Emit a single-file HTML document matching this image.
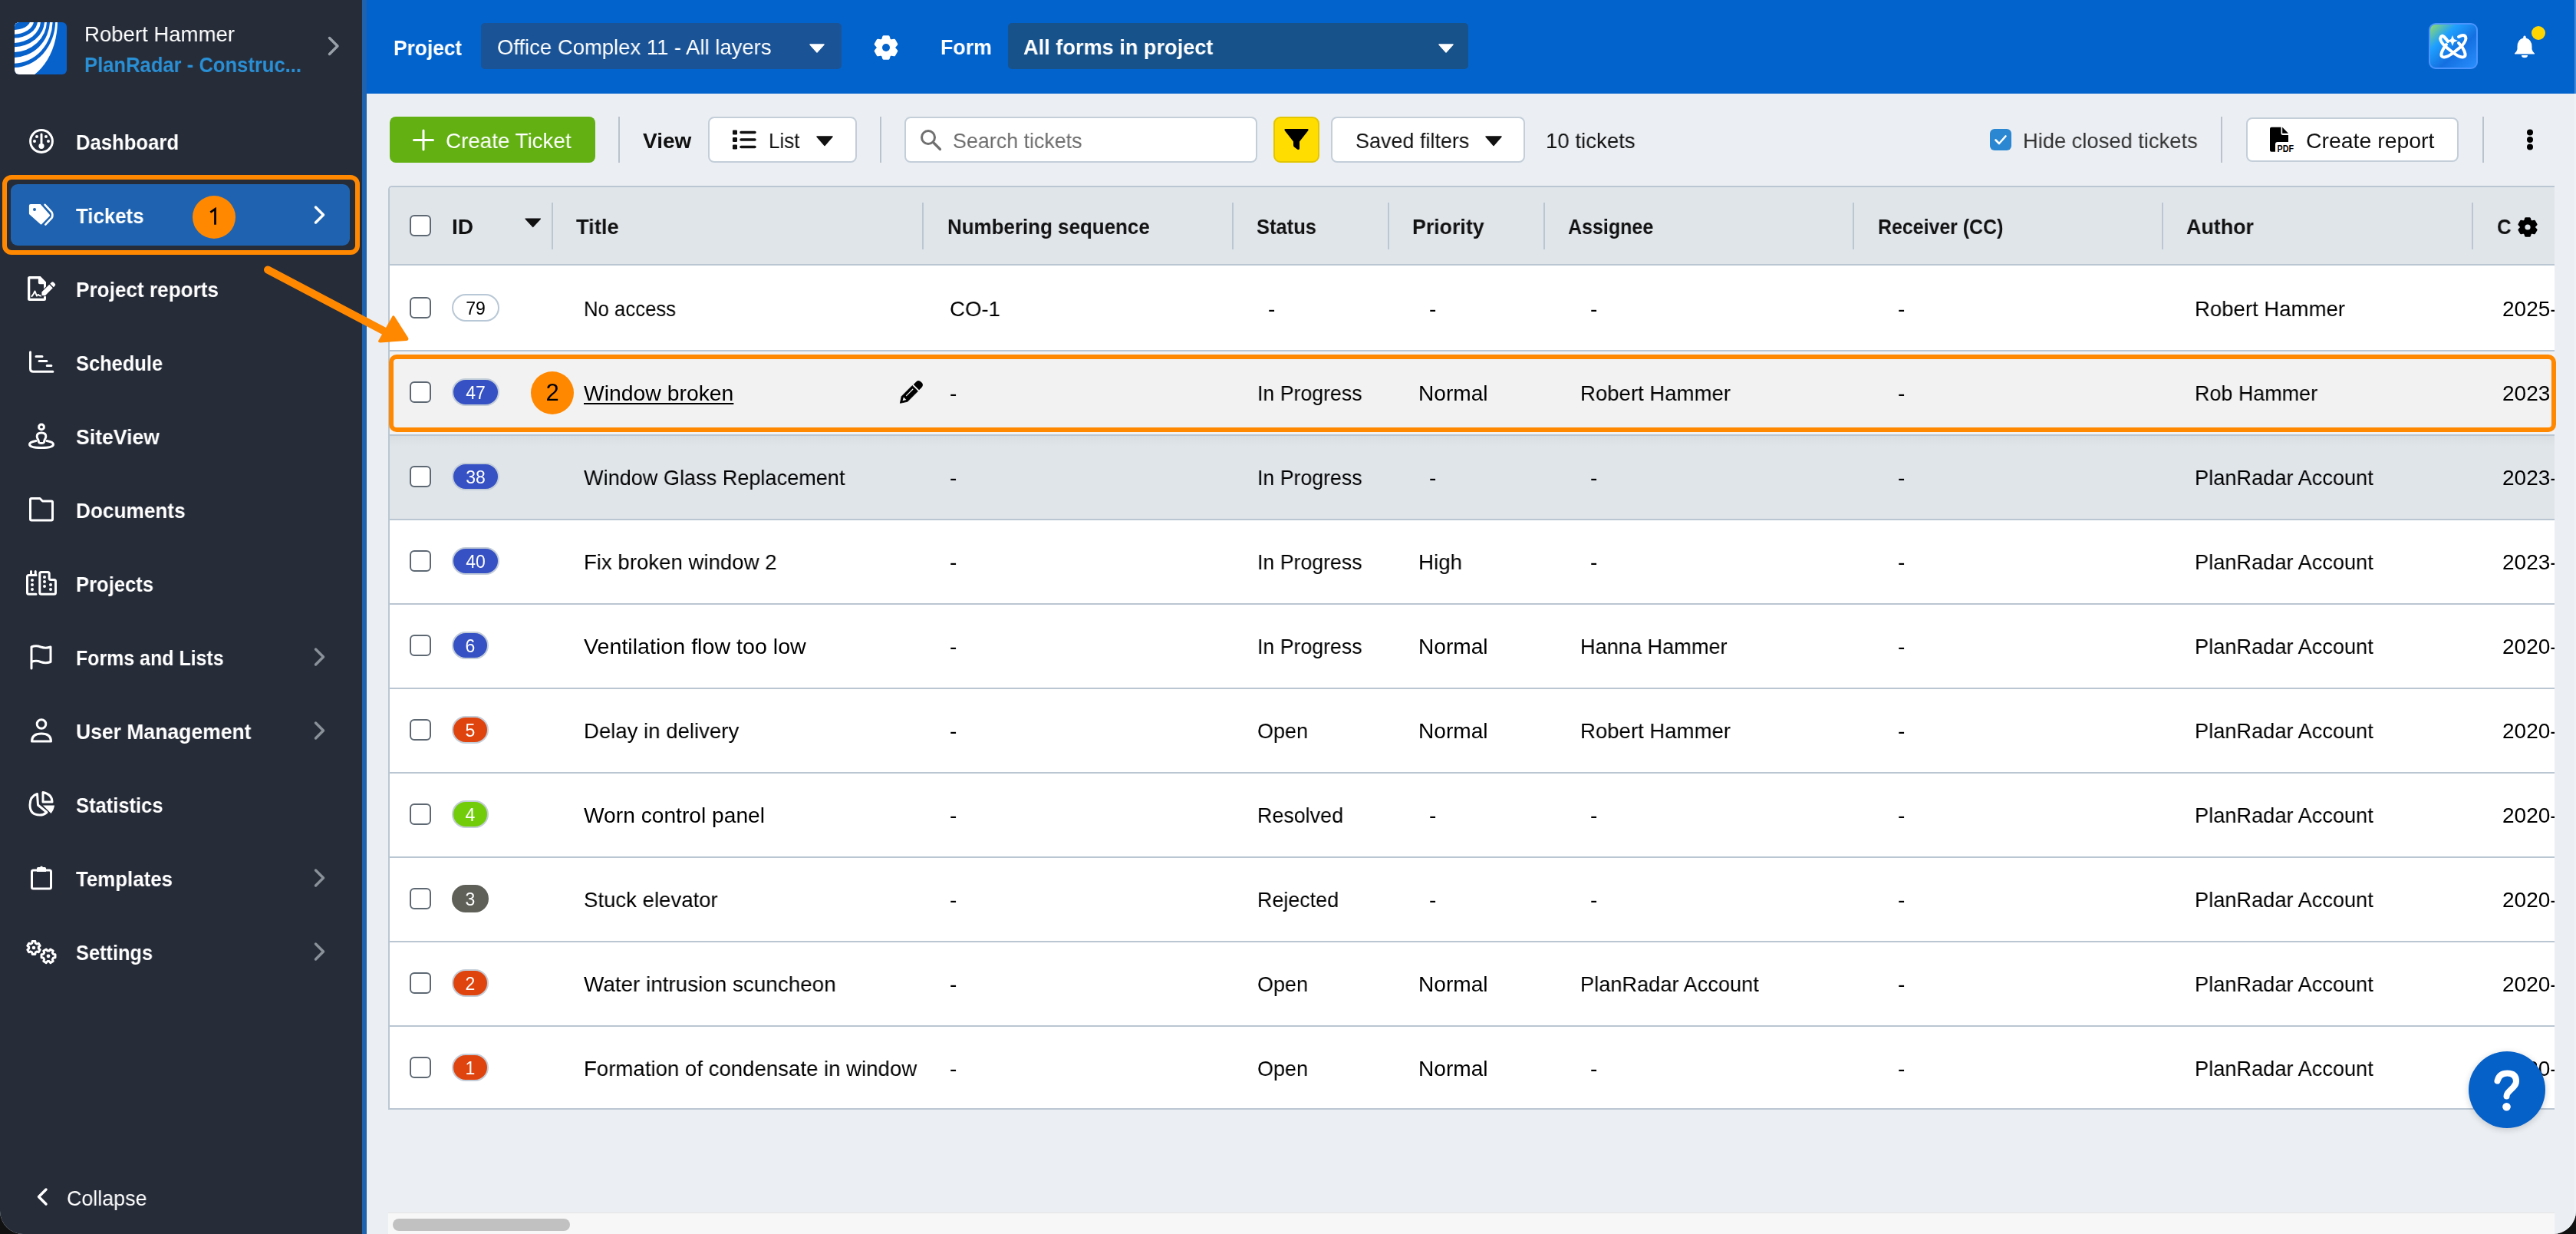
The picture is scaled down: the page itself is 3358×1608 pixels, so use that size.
<!DOCTYPE html><html><head><meta charset="utf-8"><style>html,body{margin:0;padding:0;width:3358px;height:1608px;overflow:hidden;background:#111;}#app{position:absolute;left:0;top:0;width:3358px;height:1608px;overflow:hidden;border-radius:0 0 30px 30px;background:#ebeff3;font-family:"Liberation Sans", sans-serif;}.t{position:absolute;white-space:nowrap;will-change:transform;}.r{position:absolute;}.s{position:absolute;overflow:visible;}</style></head><body><div id="app"><div class="r" style="left:0px;top:0px;width:472px;height:1608px;background:#262c38"></div>
<div class="r" style="left:472px;top:0px;width:6px;height:1608px;background:#1f62ae"></div>
<div class="r" style="left:478px;top:0px;width:2880px;height:122px;background:#0363cc"></div>
<div class="r" style="left:478px;top:122px;width:2880px;height:1486px;background:#ebeff3"></div>
<svg class="s" style="left:17px;top:27px;" width="72" height="72" viewBox="17 27 72 72"><defs><clipPath id="lc"><rect x="19" y="29" width="68" height="68" rx="6"/></clipPath></defs><rect x="19" y="29" width="68" height="68" rx="6" fill="#0862cc"/><g clip-path="url(#lc)"><ellipse cx="17" cy="27" rx="58.02" ry="80.05" fill="#fff"/><ellipse cx="17" cy="27" rx="55.23" ry="61.04" fill="#0862cc"/><ellipse cx="17" cy="27" rx="51.63" ry="55.74" fill="#fff"/><ellipse cx="17" cy="27" rx="48.04" ry="47.94" fill="#0862cc"/><ellipse cx="17" cy="27" rx="44.05" ry="41.04" fill="#fff"/><ellipse cx="17" cy="27" rx="41.07" ry="34.34" fill="#0862cc"/><ellipse cx="17" cy="27" rx="35.99" ry="28.94" fill="#fff"/><ellipse cx="17" cy="27" rx="32.03" ry="22.64" fill="#0862cc"/><ellipse cx="17" cy="27" rx="27.07" ry="17.75" fill="#fff"/><ellipse cx="17" cy="27" rx="22.11" ry="11.95" fill="#0862cc"/></g></svg>
<div class="t" style="left:110px;top:31px;font-size:28px;line-height:28px;font-weight:400;color:#fff;transform:scaleX(0.9841);transform-origin:0 0;">Robert Hammer</div>
<div class="t" style="left:110px;top:71px;font-size:28px;line-height:28px;font-weight:700;color:#2a90d6;transform:scaleX(0.9140);transform-origin:0 0;">PlanRadar - Construc...</div>
<svg class="s" style="left:420px;top:40px;" width="30" height="40" viewBox="420 40 30 40"><path d="M429.5 49.5 L440 60 L429.5 70.5" fill="none" stroke="#9aa0a8" stroke-width="3.5" stroke-linecap="round" stroke-linejoin="round"/></svg>
<div class="r" style="left:3px;top:228px;width:466px;height:104px;border:6px solid #ff8800;border-radius:12px;box-sizing:border-box"></div>
<div class="r" style="left:14px;top:240px;width:442px;height:80px;background:#1f63b0;border-radius:9px"></div>
<div class="t" style="left:99px;top:172px;font-size:28px;line-height:28px;font-weight:700;color:#fff;transform:scaleX(0.9162);transform-origin:0 0;">Dashboard</div>
<div class="t" style="left:99px;top:268px;font-size:28px;line-height:28px;font-weight:700;color:#fff;transform:scaleX(0.9219);transform-origin:0 0;">Tickets</div>
<div class="t" style="left:99px;top:364px;font-size:28px;line-height:28px;font-weight:700;color:#fff;transform:scaleX(0.9339);transform-origin:0 0;">Project reports</div>
<div class="t" style="left:99px;top:460px;font-size:28px;line-height:28px;font-weight:700;color:#fff;transform:scaleX(0.9077);transform-origin:0 0;">Schedule</div>
<div class="t" style="left:99px;top:556px;font-size:28px;line-height:28px;font-weight:700;color:#fff;transform:scaleX(0.9507);transform-origin:0 0;">SiteView</div>
<div class="t" style="left:99px;top:652px;font-size:28px;line-height:28px;font-weight:700;color:#fff;transform:scaleX(0.9353);transform-origin:0 0;">Documents</div>
<div class="t" style="left:99px;top:748px;font-size:28px;line-height:28px;font-weight:700;color:#fff;transform:scaleX(0.9140);transform-origin:0 0;">Projects</div>
<div class="t" style="left:99px;top:844px;font-size:28px;line-height:28px;font-weight:700;color:#fff;transform:scaleX(0.8906);transform-origin:0 0;">Forms and Lists</div>
<svg class="s" style="left:400px;top:840px;" width="30" height="32" viewBox="400 840 30 32"><path d="M411.5 846 L421.5 856 L411.5 866" fill="none" stroke="#8b9199" stroke-width="3.5" stroke-linecap="round" stroke-linejoin="round"/></svg>
<div class="t" style="left:99px;top:940px;font-size:28px;line-height:28px;font-weight:700;color:#fff;transform:scaleX(0.9474);transform-origin:0 0;">User Management</div>
<svg class="s" style="left:400px;top:936px;" width="30" height="32" viewBox="400 936 30 32"><path d="M411.5 942 L421.5 952 L411.5 962" fill="none" stroke="#8b9199" stroke-width="3.5" stroke-linecap="round" stroke-linejoin="round"/></svg>
<div class="t" style="left:99px;top:1036px;font-size:28px;line-height:28px;font-weight:700;color:#fff;transform:scaleX(0.9116);transform-origin:0 0;">Statistics</div>
<div class="t" style="left:99px;top:1132px;font-size:28px;line-height:28px;font-weight:700;color:#fff;transform:scaleX(0.9236);transform-origin:0 0;">Templates</div>
<svg class="s" style="left:400px;top:1128px;" width="30" height="32" viewBox="400 1128 30 32"><path d="M411.5 1134 L421.5 1144 L411.5 1154" fill="none" stroke="#8b9199" stroke-width="3.5" stroke-linecap="round" stroke-linejoin="round"/></svg>
<div class="t" style="left:99px;top:1228px;font-size:28px;line-height:28px;font-weight:700;color:#fff;transform:scaleX(0.9052);transform-origin:0 0;">Settings</div>
<svg class="s" style="left:400px;top:1224px;" width="30" height="32" viewBox="400 1224 30 32"><path d="M411.5 1230 L421.5 1240 L411.5 1250" fill="none" stroke="#8b9199" stroke-width="3.5" stroke-linecap="round" stroke-linejoin="round"/></svg>
<svg class="s" style="left:400px;top:264px;" width="30" height="32" viewBox="400 264 30 32"><path d="M411.5 270 L421.5 280 L411.5 290" fill="none" stroke="#fff" stroke-width="3.5" stroke-linecap="round" stroke-linejoin="round"/></svg>
<div class="r" style="left:251px;top:255px;width:56px;height:56px;background:#ff8800;border-radius:50%"></div>
<svg class="s" style="left:265px;top:265px;" width="30" height="35" viewBox="265 265 30 35"><path d="M280.5 292.7 L280.5 272.3 L274.3 276.6" fill="none" stroke="#000" stroke-width="2.7" stroke-linejoin="miter" stroke-linecap="butt"/></svg>
<svg class="s" style="left:30px;top:154px;" width="50" height="60" viewBox="30 154 50 60"><circle cx="54" cy="184" r="14.4" fill="none" stroke="#fff" stroke-width="3" stroke-linecap="round" stroke-linejoin="round"/><rect x="52.5" y="173.5" width="3" height="14" rx="1.5" fill="#fff"/><circle cx="54" cy="190.3" r="3.6" fill="#fff"/><circle cx="48" cy="178" r="2" fill="#fff"/><circle cx="60" cy="178" r="2" fill="#fff"/><circle cx="45" cy="184" r="2" fill="#fff"/><circle cx="63" cy="184" r="2" fill="#fff"/></svg>
<svg class="s" style="left:30px;top:250px;" width="50" height="60" viewBox="30 250 50 60"><path d="M40 266 L52.7 266 L64.8 279.8 Q65.5 280.6 64.8 281.4 L54.5 292 Q53.5 293 52.5 292 L38.5 279.5 Q37.9 279 37.9 278 L37.9 268 Q37.9 266 40 266 Z" fill="#fff"/><circle cx="45" cy="273" r="2" fill="#1f63b0"/><path d="M58.6 266.8 L67.5 276.5 Q69.5 280.5 67.5 284 L59.3 292.6" fill="none" stroke="#fff" stroke-width="2.6" stroke-linecap="round"/></svg>
<svg class="s" style="left:30px;top:346px;" width="50" height="60" viewBox="30 346 50 60"><path fill-rule="evenodd" fill="#fff" d="M38.5 360 L52.7 360 L60 367.4 L60 389.5 Q60 392 57.5 392 L38.5 392 Q36 392 36 389.5 L36 362.5 Q36 360 38.5 360 Z M39.3 363.4 L49.9 363.4 L49.9 368.5 Q49.9 370.3 51.7 370.3 L57 370.3 L57 388.7 L39.3 388.7 Z"/><path d="M41.5 386 Q43.5 384 45.5 379.5 Q47 383.5 48 385.5 Q49.5 383 51 385 L53.5 385.5" fill="none" stroke="#fff" stroke-width="2" stroke-linecap="round" stroke-linejoin="round"/><path d="M54.5 385 L54.36 380.62 L64.26 370.72 L68.78 375.24 L58.88 385.14 Z" fill="#fff" stroke="#262c38" stroke-width="2.2" stroke-linejoin="round"/><path d="M54.5 385 L54.36 380.62 L64.26 370.72 L68.78 375.24 L58.88 385.14 Z" fill="#fff"/><path d="M65.32 369.66 L67.2 367.8 Q68.5 366.5 69.8 367.8 L71.7 369.7 Q73 371 71.7 372.3 L69.84 374.18 Z" fill="#fff"/></svg>
<svg class="s" style="left:30px;top:442px;" width="50" height="60" viewBox="30 442 50 60"><path d="M39.5 458.8 L39.5 480.5 Q39.5 484.3 43.3 484.3 L68.9 484.3" fill="none" stroke="#fff" stroke-width="3" stroke-linecap="round" stroke-linejoin="round"/><path d="M47 464.4 L55 464.4 M51 470.5 L61 470.5 M61.2 476.4 L66.9 476.4" fill="none" stroke="#fff" stroke-width="3" stroke-linecap="round" stroke-linejoin="round"/></svg>
<svg class="s" style="left:30px;top:538px;" width="50" height="60" viewBox="30 538 50 60"><circle cx="54" cy="556.4" r="3.4" fill="none" stroke="#fff" stroke-width="3" stroke-linecap="round" stroke-linejoin="round"/><path d="M49.8 573 Q48.2 571 48.2 568.5 Q48.2 563.9 54 563.9 Q59.8 563.9 59.8 568.5 Q59.8 571 58.2 573 L57.4 576.2 Q57 577.6 54 577.6 Q51 577.6 50.6 576.2 Z" fill="none" stroke="#fff" stroke-width="3" stroke-linecap="round" stroke-linejoin="round"/><path d="M47 574.5 Q38.5 576 38.5 579 Q38.5 583.5 54 583.5 Q69.5 583.5 69.5 579 Q69.5 576 61 574.5" fill="none" stroke="#fff" stroke-width="3" stroke-linecap="round" stroke-linejoin="round"/></svg>
<svg class="s" style="left:30px;top:634px;" width="50" height="60" viewBox="30 634 50 60"><path d="M39.5 651 Q39.5 649.5 41 649.5 L52 649.5 L55.5 653 L67 653 Q68.5 653 68.5 654.5 L68.5 676.5 Q68.5 678 67 678 L41 678 Q39.5 678 39.5 676.5 Z" fill="none" stroke="#fff" stroke-width="3" stroke-linecap="round" stroke-linejoin="round"/></svg>
<svg class="s" style="left:30px;top:730px;" width="50" height="60" viewBox="30 730 50 60"><path d="M47 749.5 L37.5 749.5 Q35.5 749.5 35.5 751.5 L35.5 772.2 Q35.5 774.2 37.5 774.2 L47 774.2" fill="none" stroke="#fff" stroke-width="3" stroke-linecap="round" stroke-linejoin="round"/><path d="M40.5 744.5 L40.5 749 M46.2 744.5 L46.2 749" fill="none" stroke="#fff" stroke-width="3" stroke-linecap="round" stroke-linejoin="round"/><path d="M53.8 745.5 Q51.8 745.5 51.8 747.5 L51.8 772.2 Q51.8 774.2 53.8 774.2 L70.5 774.2 Q72.5 774.2 72.5 772.2 L72.5 757.5 Q72.5 755.5 70.5 755.5 L66.2 755.5 Q64.2 755.5 64.2 753.5 L64.2 747.5 Q64.2 745.5 62.2 745.5 Z" fill="none" stroke="#fff" stroke-width="3" stroke-linecap="round" stroke-linejoin="round"/><circle cx="42" cy="756" r="2" fill="#fff"/><circle cx="42" cy="762" r="2" fill="#fff"/><circle cx="42" cy="768" r="2" fill="#fff"/><circle cx="58" cy="752" r="2" fill="#fff"/><circle cx="58" cy="758" r="2" fill="#fff"/><circle cx="58" cy="764" r="2" fill="#fff"/><circle cx="66" cy="762" r="2" fill="#fff"/><circle cx="66" cy="768" r="2" fill="#fff"/></svg>
<svg class="s" style="left:30px;top:826px;" width="50" height="60" viewBox="30 826 50 60"><path d="M41 871 L41 843 Q47 840.5 53 843 Q59.5 845.5 66 843 L66 862.5 Q59.5 865 53 862.5 Q47 860 41 862.5" fill="none" stroke="#fff" stroke-width="3" stroke-linecap="round" stroke-linejoin="round"/></svg>
<svg class="s" style="left:30px;top:922px;" width="50" height="60" viewBox="30 922 50 60"><circle cx="54" cy="943.5" r="5.8" fill="none" stroke="#fff" stroke-width="3" stroke-linecap="round" stroke-linejoin="round"/><path d="M41.5 966 Q41.5 956 54 956 Q66.5 956 66.5 966 Z" fill="none" stroke="#fff" stroke-width="3" stroke-linecap="round" stroke-linejoin="round"/></svg>
<svg class="s" style="left:30px;top:1018px;" width="50" height="60" viewBox="30 1018 50 60"><path d="M48.5 1034.5 Q39 1037.5 39 1049 Q39 1062 52 1062 Q57 1062 61 1058.5 L49.5 1049 Z" fill="none" stroke="#fff" stroke-width="3" stroke-linecap="round" stroke-linejoin="round"/><path d="M56 1032.5 L56 1045 L68 1045 Q68 1035 56 1032.5 Z" fill="none" stroke="#fff" stroke-width="3" stroke-linecap="round" stroke-linejoin="round"/><path d="M56 1049.5 L71 1049.5 Q70.5 1055 66.5 1060 Z" fill="#fff"/></svg>
<svg class="s" style="left:30px;top:1114px;" width="50" height="60" viewBox="30 1114 50 60"><path d="M49 1134 L43.5 1134 Q41.5 1134 41.5 1136 L41.5 1156 Q41.5 1158 43.5 1158 L64.5 1158 Q66.5 1158 66.5 1156 L66.5 1136 Q66.5 1134 64.5 1134 L59 1134" fill="none" stroke="#fff" stroke-width="3" stroke-linecap="round" stroke-linejoin="round"/><path d="M48 1136 L48 1131.5 Q48 1130 49.5 1130 L52 1130 Q54 1127 56 1130 L58.5 1130 Q60 1130 60 1131.5 L60 1136 Z" fill="#fff"/></svg>
<svg class="s" style="left:30px;top:1210px;" width="50" height="60" viewBox="30 1210 50 60"><path d="M41.75 1229.01 L42.12 1226.61 L45.88 1226.61 L46.25 1229.01 L48.06 1230.05 L50.33 1229.18 L52.21 1232.43 L50.31 1233.96 L50.31 1236.04 L52.21 1237.57 L50.33 1240.82 L48.06 1239.95 L46.25 1240.99 L45.88 1243.39 L42.12 1243.39 L41.75 1240.99 L39.94 1239.95 L37.67 1240.82 L35.79 1237.57 L37.69 1236.04 L37.69 1233.96 L35.79 1232.43 L37.67 1229.18 L39.94 1230.05 Z" fill="none" stroke="#fff" stroke-width="3" stroke-linecap="round" stroke-linejoin="round" stroke-width="2.6"/><circle cx="44" cy="1235" r="2.3" fill="#fff"/><path d="M69.46 1243.37 L71.98 1243.79 L71.98 1247.81 L69.46 1248.23 L68.33 1250.18 L69.23 1252.57 L65.75 1254.58 L64.12 1252.61 L61.88 1252.61 L60.25 1254.58 L56.77 1252.57 L57.67 1250.18 L56.54 1248.23 L54.02 1247.81 L54.02 1243.79 L56.54 1243.37 L57.67 1241.42 L56.77 1239.03 L60.25 1237.02 L61.88 1238.99 L64.12 1238.99 L65.75 1237.02 L69.23 1239.03 L68.33 1241.42 Z" fill="none" stroke="#fff" stroke-width="3" stroke-linecap="round" stroke-linejoin="round" stroke-width="2.6"/><circle cx="63" cy="1245.8" r="2.4" fill="#fff"/></svg>
<svg class="s" style="left:40px;top:1540px;" width="30" height="40" viewBox="40 1540 30 40"><path d="M60 1550 L50.5 1559.5 L60 1569" fill="none" stroke="#fff" stroke-width="3.5" stroke-linecap="round" stroke-linejoin="round"/></svg>
<div class="t" style="left:87px;top:1548px;font-size:28px;line-height:28px;font-weight:400;color:#fff;transform:scaleX(0.9582);transform-origin:0 0;">Collapse</div>
<div class="t" style="left:513px;top:49px;font-size:28px;line-height:28px;font-weight:700;color:#fff;transform:scaleX(0.9396);transform-origin:0 0;">Project</div>
<div class="r" style="left:627px;top:30px;width:470px;height:60px;background:#1a5396;border-radius:5px"></div>
<div class="t" style="left:648px;top:48px;font-size:28px;line-height:28px;font-weight:400;color:#fff;transform:scaleX(0.9804);transform-origin:0 0;">Office Complex 11 - All layers</div>
<svg class="s" style="left:1054px;top:55px;" width="22" height="16" viewBox="1054 55 22 16"><path d="M1056 58 L1074 58 L1065 68 Z" fill="#fff" stroke="#fff" stroke-width="1.5" stroke-linejoin="round"/></svg>
<svg class="s" style="left:1135px;top:42px;" width="40" height="40" viewBox="1135 42 40 40"><path d="M1150.79 52.05 L1152.04 48.11 L1157.96 48.11 L1159.21 52.05 L1161.51 53.38 L1165.55 52.49 L1168.51 57.62 L1165.72 60.67 L1165.72 63.33 L1168.51 66.38 L1165.55 71.51 L1161.51 70.62 L1159.21 71.95 L1157.96 75.89 L1152.04 75.89 L1150.79 71.95 L1148.49 70.62 L1144.45 71.51 L1141.49 66.38 L1144.28 63.33 L1144.28 60.67 L1141.49 57.62 L1144.45 52.49 L1148.49 53.38 Z" fill="#fff" stroke="#fff" stroke-width="3.6" stroke-linejoin="round"/><circle cx="1155" cy="62" r="5" fill="#0363cc"/></svg>
<div class="t" style="left:1226px;top:48px;font-size:28px;line-height:28px;font-weight:700;color:#fff;transform:scaleX(0.9571);transform-origin:0 0;">Form</div>
<div class="r" style="left:1314px;top:30px;width:600px;height:60px;background:#17528a;border-radius:5px"></div>
<div class="t" style="left:1334px;top:48px;font-size:28px;line-height:28px;font-weight:700;color:#fff;transform:scaleX(0.9696);transform-origin:0 0;">All forms in project</div>
<svg class="s" style="left:1872px;top:55px;" width="26" height="16" viewBox="1872 55 26 16"><path d="M1876 58 L1894 58 L1885 68 Z" fill="#fff" stroke="#fff" stroke-width="1.5" stroke-linejoin="round"/></svg>
<svg class="s" style="left:3164px;top:28px;" width="68" height="64" viewBox="3164 28 68 64"><defs><linearGradient id="aig" x1="0" y1="0" x2="1" y2="1"><stop offset="0" stop-color="#98e060"/><stop offset="0.3" stop-color="#1fa0ff"/><stop offset="0.6" stop-color="#1470e0"/><stop offset="1" stop-color="#2a90ff"/></linearGradient></defs><rect x="3167" y="31" width="62" height="58" rx="8" fill="url(#aig)" stroke="#4a94ff" stroke-width="2"/><path d="M3191 54 Q3184 44 3182 48 Q3179 52 3187 60 L3197 68 Q3207 76 3212 74 Q3216 72 3210 62 L3205 56" fill="none" stroke="#fff" stroke-width="4" stroke-linecap="round"/><path d="M3205 48 Q3212 44 3214 48 Q3216 52 3209 60 L3199 68 Q3189 76 3184 74 Q3180 72 3186 62 L3189 58" fill="none" stroke="#fff" stroke-width="4" stroke-linecap="round"/><path d="M3197 46 L3199 51 L3204 53 L3199 55 L3197 60 L3195 55 L3190 53 L3195 51 Z" fill="#fff"/></svg>
<svg class="s" style="left:3274px;top:30px;" width="48" height="50" viewBox="3274 30 48 50"><path d="M3291 46.5 Q3292.8 46.5 3292.8 49.5 Q3300.5 51.5 3300.5 61 L3300.5 64 Q3301 67 3304 69.5 L3304 70.5 L3278 70.5 L3278 69.5 Q3281 67 3281.5 64 L3281.5 61 Q3281.5 51.5 3289.2 49.5 Q3289.2 46.5 3291 46.5 Z" fill="#fff"/><path d="M3287 72 L3295 72 Q3295 75.3 3291 75.3 Q3287 75.3 3287 72 Z" fill="#fff"/><circle cx="3309" cy="43" r="9" fill="#ffd600"/></svg>
<div class="r" style="left:3356px;top:0px;width:2px;height:1608px;background:rgba(255,255,255,0.25)"></div>
<div class="r" style="left:508px;top:152px;width:268px;height:60px;background:#62b012;border-radius:8px"></div>
<svg class="s" style="left:535px;top:168px;" width="34" height="30" viewBox="535 168 34 30"><path d="M552 170 L552 195 M539.5 182.5 L564.5 182.5" stroke="#fff" stroke-width="3" stroke-linecap="round"/></svg>
<div class="t" style="left:581px;top:170px;font-size:28px;line-height:28px;font-weight:400;color:#fff;transform:scaleX(0.9918);transform-origin:0 0;">Create Ticket</div>
<div class="r" style="left:806px;top:152px;width:2px;height:60px;background:#b9c3cd"></div>
<div class="t" style="left:838px;top:170px;font-size:28px;line-height:28px;font-weight:700;color:#111;transform:scaleX(0.9982);transform-origin:0 0;">View</div>
<div class="r" style="left:923px;top:152px;width:194px;height:60px;background:#fff;border:2px solid #c3ced9;border-radius:8px;box-sizing:border-box"></div>
<svg class="s" style="left:950px;top:165px;" width="40" height="34" viewBox="950 165 40 34"><rect x="955" y="169.5" width="6" height="6" rx="1.2" fill="#111"/><rect x="955" y="179" width="6" height="6" rx="1.2" fill="#111"/><rect x="955" y="188.5" width="6" height="6" rx="1.2" fill="#111"/><path d="M966 172.5 L984 172.5 M966 182 L984 182 M966 191.5 L984 191.5" stroke="#111" stroke-width="3.5" stroke-linecap="round"/></svg>
<div class="t" style="left:1002px;top:170px;font-size:28px;line-height:28px;font-weight:400;color:#111;transform:scaleX(0.9294);transform-origin:0 0;">List</div>
<svg class="s" style="left:1060px;top:174px;" width="30" height="20" viewBox="1060 174 30 20"><path d="M1065 178 L1085 178 L1075 189.5 Z" fill="#111" stroke="#111" stroke-width="1.5" stroke-linejoin="round"/></svg>
<div class="r" style="left:1147px;top:152px;width:2px;height:60px;background:#b9c3cd"></div>
<div class="r" style="left:1179px;top:152px;width:460px;height:60px;background:#fff;border:2px solid #c3ced9;border-radius:8px;box-sizing:border-box"></div>
<svg class="s" style="left:1195px;top:164px;" width="36" height="36" viewBox="1195 164 36 36"><circle cx="1210" cy="179" r="8.5" fill="none" stroke="#707070" stroke-width="3"/><path d="M1216.5 185.5 L1225.5 194.5" stroke="#707070" stroke-width="3.2" stroke-linecap="round"/></svg>
<div class="t" style="left:1242px;top:170px;font-size:28px;line-height:28px;font-weight:400;color:#6c6c6c;transform:scaleX(0.9587);transform-origin:0 0;">Search tickets</div>
<div class="r" style="left:1660px;top:152px;width:60px;height:60px;background:#ffdd00;border:2px solid #e3c500;border-radius:9px;box-sizing:border-box"></div>
<svg class="s" style="left:1670px;top:164px;" width="40" height="36" viewBox="1670 164 40 36"><path d="M1675.5 168 L1704.5 168 Q1706.5 168.5 1705 170.5 L1694 184.5 L1694 193.5 Q1693.5 196 1691 194.5 L1687 191.5 Q1686 190.5 1686 189 L1686 184.5 L1675 170.5 Q1673.5 168.5 1675.5 168 Z" fill="#000"/></svg>
<div class="r" style="left:1735px;top:152px;width:253px;height:60px;background:#fff;border:2px solid #c3ced9;border-radius:8px;box-sizing:border-box"></div>
<div class="t" style="left:1767px;top:170px;font-size:28px;line-height:28px;font-weight:400;color:#111;transform:scaleX(0.9625);transform-origin:0 0;">Saved filters</div>
<svg class="s" style="left:1932px;top:174px;" width="30" height="20" viewBox="1932 174 30 20"><path d="M1937 178 L1957 178 L1947 189.5 Z" fill="#111" stroke="#111" stroke-width="1.5" stroke-linejoin="round"/></svg>
<div class="t" style="left:2015px;top:170px;font-size:28px;line-height:28px;font-weight:400;color:#111;transform:scaleX(0.9858);transform-origin:0 0;">10 tickets</div>
<div class="r" style="left:2594px;top:168px;width:28px;height:28px;background:#2b87d1;border-radius:6px"></div>
<svg class="s" style="left:2594px;top:168px;" width="28" height="28" viewBox="2594 168 28 28"><path d="M2601.5 182.5 L2606 187 L2614.5 177.5" fill="none" stroke="#fff" stroke-width="2.6" stroke-linecap="round" stroke-linejoin="round"/></svg>
<div class="t" style="left:2637px;top:170px;font-size:28px;line-height:28px;font-weight:400;color:#333;transform:scaleX(0.9754);transform-origin:0 0;">Hide closed tickets</div>
<div class="r" style="left:2895px;top:152px;width:2px;height:60px;background:#b9c3cd"></div>
<div class="r" style="left:2928px;top:153px;width:277px;height:58px;background:#fff;border:2px solid #c3ced9;border-radius:8px;box-sizing:border-box"></div>
<svg class="s" style="left:2955px;top:162px;" width="40" height="40" viewBox="2955 162 40 40"><path d="M2961 165.8 L2973.5 165.8 L2973.5 173.5 Q2973.5 176 2976 176 L2983 176 L2983 185 L2969 185 Q2966 185 2966 188 L2966 197.7 L2961 197.7 Q2959 197.7 2959 195.7 L2959 167.8 Q2959 165.8 2961 165.8 Z" fill="#000"/><path d="M2975.2 165.8 L2983 173.7 L2975.2 173.7 Z" fill="#000"/><text x="2968.5" y="197.6" font-family="Liberation Sans" font-weight="700" font-size="12.5" fill="#000" textLength="21.5" lengthAdjust="spacingAndGlyphs">PDF</text></svg>
<div class="t" style="left:3006px;top:170px;font-size:28px;line-height:28px;font-weight:400;color:#111;transform:scaleX(1.0147);transform-origin:0 0;">Create report</div>
<div class="r" style="left:3236px;top:152px;width:2px;height:60px;background:#b9c3cd"></div>
<svg class="s" style="left:3290px;top:165px;" width="16" height="34" viewBox="3290 165 16 34"><circle cx="3298" cy="172.5" r="4" fill="#000"/><circle cx="3298" cy="182" r="4" fill="#000"/><circle cx="3298" cy="191.5" r="4" fill="#000"/></svg>
<div class="r" style="left:506px;top:242px;width:2824px;height:1204px;background:#fff;border:2px solid #bac6d2;border-right:none;box-sizing:border-box;border-top-left-radius:5px"></div>
<div class="r" style="left:508px;top:244px;width:2822px;height:100px;background:#e0e5ea;border-top-left-radius:3px"></div>
<div class="r" style="left:506px;top:344px;width:2824px;height:2px;background:#bac6d2"></div>
<div class="r" style="left:534px;top:280px;width:28px;height:28px;background:#fff;border:2.5px solid #5d6873;border-radius:6px;box-sizing:border-box"></div>
<div class="t" style="left:589px;top:282px;font-size:28px;line-height:28px;font-weight:700;color:#111;transform:scaleX(1.0071);transform-origin:0 0;">ID</div>
<svg class="s" style="left:680px;top:280px;" width="30" height="20" viewBox="680 280 30 20"><path d="M685 285 L704.5 285 L694.75 295.5 Z" fill="#111" stroke="#111" stroke-width="1.2" stroke-linejoin="round"/></svg>
<div class="r" style="left:719px;top:264px;width:2px;height:61px;background:#bac6d2"></div>
<div class="r" style="left:1202px;top:264px;width:2px;height:61px;background:#bac6d2"></div>
<div class="r" style="left:1606px;top:264px;width:2px;height:61px;background:#bac6d2"></div>
<div class="r" style="left:1809px;top:264px;width:2px;height:61px;background:#bac6d2"></div>
<div class="r" style="left:2012px;top:264px;width:2px;height:61px;background:#bac6d2"></div>
<div class="r" style="left:2415px;top:264px;width:2px;height:61px;background:#bac6d2"></div>
<div class="r" style="left:2818px;top:264px;width:2px;height:61px;background:#bac6d2"></div>
<div class="r" style="left:3222px;top:264px;width:2px;height:61px;background:#bac6d2"></div>
<div class="t" style="left:751px;top:282px;font-size:28px;line-height:28px;font-weight:700;color:#111;transform:scaleX(0.9744);transform-origin:0 0;">Title</div>
<div class="t" style="left:1235px;top:282px;font-size:28px;line-height:28px;font-weight:700;color:#111;transform:scaleX(0.9261);transform-origin:0 0;">Numbering sequence</div>
<div class="t" style="left:1638px;top:282px;font-size:28px;line-height:28px;font-weight:700;color:#111;transform:scaleX(0.9103);transform-origin:0 0;">Status</div>
<div class="t" style="left:1841px;top:282px;font-size:28px;line-height:28px;font-weight:700;color:#111;transform:scaleX(0.9548);transform-origin:0 0;">Priority</div>
<div class="t" style="left:2044px;top:282px;font-size:28px;line-height:28px;font-weight:700;color:#111;transform:scaleX(0.8932);transform-origin:0 0;">Assignee</div>
<div class="t" style="left:2448px;top:282px;font-size:28px;line-height:28px;font-weight:700;color:#111;transform:scaleX(0.8898);transform-origin:0 0;">Receiver (CC)</div>
<div class="t" style="left:2850px;top:282px;font-size:28px;line-height:28px;font-weight:700;color:#111;transform:scaleX(0.9590);transform-origin:0 0;">Author</div>
<div class="t" style="left:3255px;top:282px;font-size:28px;line-height:28px;font-weight:700;color:#111;transform:scaleX(0.9200);transform-origin:0 0;">C</div>
<svg class="s" style="left:3278px;top:278px;" width="34" height="36" viewBox="3278 278 34 36"><path d="M3291.57 287.89 L3292.58 284.65 L3297.42 284.65 L3298.43 287.89 L3300.31 288.98 L3303.62 288.23 L3306.03 292.42 L3303.73 294.92 L3303.73 297.08 L3306.03 299.58 L3303.62 303.77 L3300.31 303.02 L3298.43 304.11 L3297.42 307.35 L3292.58 307.35 L3291.57 304.11 L3289.69 303.02 L3286.38 303.77 L3283.97 299.58 L3286.27 297.08 L3286.27 294.92 L3283.97 292.42 L3286.38 288.23 L3289.69 288.98 Z" fill="#000" stroke="#000" stroke-width="3" stroke-linejoin="round"/><circle cx="3295" cy="296" r="3.6" fill="#e0e5ea"/></svg>
<div class="r" style="left:508px;top:346px;width:2822px;height:110px;background:#fff"></div>
<div class="r" style="left:508px;top:456px;width:2822px;height:2px;background:#bac6d2"></div>
<div class="r" style="left:534px;top:387px;width:28px;height:28px;background:#fff;border:2.5px solid #5d6873;border-radius:6px;box-sizing:border-box"></div>
<div class="r" style="left:589px;top:383px;width:62px;height:36px;background:#fff;border:2px solid #b9c8d6;border-radius:18px;box-sizing:border-box"></div>
<div class="t" style="left:620.0px;top:390.5px;font-size:23px;line-height:23px;font-weight:400;color:#000;transform:translateX(-50%)">79</div>
<div class="t" style="left:761px;top:389px;font-size:28px;line-height:28px;font-weight:400;color:#000;transform:scaleX(0.9180);transform-origin:0 0;">No access</div>
<div class="t" style="left:1238px;top:389px;font-size:28px;line-height:28px;font-weight:400;color:#000;transform:scaleX(0.9865);transform-origin:0 0;">CO-1</div>
<div class="t" style="left:1653px;top:389px;font-size:28px;line-height:28px;font-weight:400;color:#000;">-</div>
<div class="t" style="left:1863px;top:389px;font-size:28px;line-height:28px;font-weight:400;color:#000;">-</div>
<div class="t" style="left:2073px;top:389px;font-size:28px;line-height:28px;font-weight:400;color:#000;">-</div>
<div class="t" style="left:2474px;top:389px;font-size:28px;line-height:28px;font-weight:400;color:#000;">-</div>
<div class="t" style="left:2861px;top:389px;font-size:28px;line-height:28px;font-weight:400;color:#000;transform:scaleX(0.9841);transform-origin:0 0;">Robert Hammer</div>
<div class="t" style="left:3262px;top:389px;font-size:28px;line-height:28px;font-weight:400;color:#000;">2025-</div>
<div class="r" style="left:508px;top:458px;width:2822px;height:108px;background:#f2f2f2"></div>
<div class="r" style="left:508px;top:566px;width:2822px;height:2px;background:#bac6d2"></div>
<div class="r" style="left:534px;top:497px;width:28px;height:28px;background:#fff;border:2.5px solid #5d6873;border-radius:6px;box-sizing:border-box"></div>
<div class="r" style="left:589px;top:493px;width:62px;height:36px;background:#3651c4;border:2px solid #c3cdd8;border-radius:18px;box-sizing:border-box"></div>
<div class="t" style="left:620.0px;top:500.5px;font-size:23px;line-height:23px;font-weight:400;color:#fff;transform:translateX(-50%)">47</div>
<div class="t" style="left:761px;top:499px;font-size:28px;line-height:28px;font-weight:400;color:#000;transform:scaleX(1.0125);transform-origin:0 0;text-decoration:underline;text-decoration-thickness:2px;text-underline-offset:3px">Window broken</div>
<div class="t" style="left:1238px;top:499px;font-size:28px;line-height:28px;font-weight:400;color:#000;">-</div>
<div class="t" style="left:1639px;top:499px;font-size:28px;line-height:28px;font-weight:400;color:#000;transform:scaleX(0.9534);transform-origin:0 0;">In Progress</div>
<div class="t" style="left:1849px;top:499px;font-size:28px;line-height:28px;font-weight:400;color:#000;transform:scaleX(1.0029);transform-origin:0 0;">Normal</div>
<div class="t" style="left:2060px;top:499px;font-size:28px;line-height:28px;font-weight:400;color:#000;transform:scaleX(0.9841);transform-origin:0 0;">Robert Hammer</div>
<div class="t" style="left:2474px;top:499px;font-size:28px;line-height:28px;font-weight:400;color:#000;">-</div>
<div class="t" style="left:2861px;top:499px;font-size:28px;line-height:28px;font-weight:400;color:#000;transform:scaleX(0.9611);transform-origin:0 0;">Rob Hammer</div>
<div class="t" style="left:3262px;top:499px;font-size:28px;line-height:28px;font-weight:400;color:#000;">2023</div>
<div class="r" style="left:508px;top:568px;width:2822px;height:108px;background:linear-gradient(#d9dee3,#e0e5ea 14px)"></div>
<div class="r" style="left:508px;top:676px;width:2822px;height:2px;background:#bac6d2"></div>
<div class="r" style="left:534px;top:607px;width:28px;height:28px;background:#fff;border:2.5px solid #5d6873;border-radius:6px;box-sizing:border-box"></div>
<div class="r" style="left:589px;top:603px;width:62px;height:36px;background:#3651c4;border:2px solid #c3cdd8;border-radius:18px;box-sizing:border-box"></div>
<div class="t" style="left:620.0px;top:610.5px;font-size:23px;line-height:23px;font-weight:400;color:#fff;transform:translateX(-50%)">38</div>
<div class="t" style="left:761px;top:609px;font-size:28px;line-height:28px;font-weight:400;color:#000;transform:scaleX(0.9679);transform-origin:0 0;">Window Glass Replacement</div>
<div class="t" style="left:1238px;top:609px;font-size:28px;line-height:28px;font-weight:400;color:#000;">-</div>
<div class="t" style="left:1639px;top:609px;font-size:28px;line-height:28px;font-weight:400;color:#000;transform:scaleX(0.9534);transform-origin:0 0;">In Progress</div>
<div class="t" style="left:1863px;top:609px;font-size:28px;line-height:28px;font-weight:400;color:#000;">-</div>
<div class="t" style="left:2073px;top:609px;font-size:28px;line-height:28px;font-weight:400;color:#000;">-</div>
<div class="t" style="left:2474px;top:609px;font-size:28px;line-height:28px;font-weight:400;color:#000;">-</div>
<div class="t" style="left:2861px;top:609px;font-size:28px;line-height:28px;font-weight:400;color:#000;transform:scaleX(0.9711);transform-origin:0 0;">PlanRadar Account</div>
<div class="t" style="left:3262px;top:609px;font-size:28px;line-height:28px;font-weight:400;color:#000;">2023-</div>
<div class="r" style="left:508px;top:678px;width:2822px;height:108px;background:#fff"></div>
<div class="r" style="left:508px;top:786px;width:2822px;height:2px;background:#bac6d2"></div>
<div class="r" style="left:534px;top:717px;width:28px;height:28px;background:#fff;border:2.5px solid #5d6873;border-radius:6px;box-sizing:border-box"></div>
<div class="r" style="left:589px;top:713px;width:62px;height:36px;background:#3651c4;border:2px solid #c3cdd8;border-radius:18px;box-sizing:border-box"></div>
<div class="t" style="left:620.0px;top:720.5px;font-size:23px;line-height:23px;font-weight:400;color:#fff;transform:translateX(-50%)">40</div>
<div class="t" style="left:761px;top:719px;font-size:28px;line-height:28px;font-weight:400;color:#000;transform:scaleX(0.9854);transform-origin:0 0;">Fix broken window 2</div>
<div class="t" style="left:1238px;top:719px;font-size:28px;line-height:28px;font-weight:400;color:#000;">-</div>
<div class="t" style="left:1639px;top:719px;font-size:28px;line-height:28px;font-weight:400;color:#000;transform:scaleX(0.9534);transform-origin:0 0;">In Progress</div>
<div class="t" style="left:1849px;top:719px;font-size:28px;line-height:28px;font-weight:400;color:#000;transform:scaleX(0.9897);transform-origin:0 0;">High</div>
<div class="t" style="left:2073px;top:719px;font-size:28px;line-height:28px;font-weight:400;color:#000;">-</div>
<div class="t" style="left:2474px;top:719px;font-size:28px;line-height:28px;font-weight:400;color:#000;">-</div>
<div class="t" style="left:2861px;top:719px;font-size:28px;line-height:28px;font-weight:400;color:#000;transform:scaleX(0.9711);transform-origin:0 0;">PlanRadar Account</div>
<div class="t" style="left:3262px;top:719px;font-size:28px;line-height:28px;font-weight:400;color:#000;">2023-</div>
<div class="r" style="left:508px;top:788px;width:2822px;height:108px;background:#fff"></div>
<div class="r" style="left:508px;top:896px;width:2822px;height:2px;background:#bac6d2"></div>
<div class="r" style="left:534px;top:827px;width:28px;height:28px;background:#fff;border:2.5px solid #5d6873;border-radius:6px;box-sizing:border-box"></div>
<div class="r" style="left:589px;top:823px;width:48px;height:36px;background:#3651c4;border:2px solid #c3cdd8;border-radius:18px;box-sizing:border-box"></div>
<div class="t" style="left:613.0px;top:830.5px;font-size:23px;line-height:23px;font-weight:400;color:#fff;transform:translateX(-50%)">6</div>
<div class="t" style="left:761px;top:829px;font-size:28px;line-height:28px;font-weight:400;color:#000;transform:scaleX(1.0230);transform-origin:0 0;">Ventilation flow too low</div>
<div class="t" style="left:1238px;top:829px;font-size:28px;line-height:28px;font-weight:400;color:#000;">-</div>
<div class="t" style="left:1639px;top:829px;font-size:28px;line-height:28px;font-weight:400;color:#000;transform:scaleX(0.9534);transform-origin:0 0;">In Progress</div>
<div class="t" style="left:1849px;top:829px;font-size:28px;line-height:28px;font-weight:400;color:#000;transform:scaleX(1.0029);transform-origin:0 0;">Normal</div>
<div class="t" style="left:2060px;top:829px;font-size:28px;line-height:28px;font-weight:400;color:#000;transform:scaleX(0.9694);transform-origin:0 0;">Hanna Hammer</div>
<div class="t" style="left:2474px;top:829px;font-size:28px;line-height:28px;font-weight:400;color:#000;">-</div>
<div class="t" style="left:2861px;top:829px;font-size:28px;line-height:28px;font-weight:400;color:#000;transform:scaleX(0.9711);transform-origin:0 0;">PlanRadar Account</div>
<div class="t" style="left:3262px;top:829px;font-size:28px;line-height:28px;font-weight:400;color:#000;">2020-</div>
<div class="r" style="left:508px;top:898px;width:2822px;height:108px;background:#fff"></div>
<div class="r" style="left:508px;top:1006px;width:2822px;height:2px;background:#bac6d2"></div>
<div class="r" style="left:534px;top:937px;width:28px;height:28px;background:#fff;border:2.5px solid #5d6873;border-radius:6px;box-sizing:border-box"></div>
<div class="r" style="left:589px;top:933px;width:48px;height:36px;background:#e0440e;border:2px solid #c3cdd8;border-radius:18px;box-sizing:border-box"></div>
<div class="t" style="left:613.0px;top:940.5px;font-size:23px;line-height:23px;font-weight:400;color:#fff;transform:translateX(-50%)">5</div>
<div class="t" style="left:761px;top:939px;font-size:28px;line-height:28px;font-weight:400;color:#000;transform:scaleX(0.9843);transform-origin:0 0;">Delay in delivery</div>
<div class="t" style="left:1238px;top:939px;font-size:28px;line-height:28px;font-weight:400;color:#000;">-</div>
<div class="t" style="left:1639px;top:939px;font-size:28px;line-height:28px;font-weight:400;color:#000;transform:scaleX(0.9635);transform-origin:0 0;">Open</div>
<div class="t" style="left:1849px;top:939px;font-size:28px;line-height:28px;font-weight:400;color:#000;transform:scaleX(1.0029);transform-origin:0 0;">Normal</div>
<div class="t" style="left:2060px;top:939px;font-size:28px;line-height:28px;font-weight:400;color:#000;transform:scaleX(0.9841);transform-origin:0 0;">Robert Hammer</div>
<div class="t" style="left:2474px;top:939px;font-size:28px;line-height:28px;font-weight:400;color:#000;">-</div>
<div class="t" style="left:2861px;top:939px;font-size:28px;line-height:28px;font-weight:400;color:#000;transform:scaleX(0.9711);transform-origin:0 0;">PlanRadar Account</div>
<div class="t" style="left:3262px;top:939px;font-size:28px;line-height:28px;font-weight:400;color:#000;">2020-</div>
<div class="r" style="left:508px;top:1008px;width:2822px;height:108px;background:#fff"></div>
<div class="r" style="left:508px;top:1116px;width:2822px;height:2px;background:#bac6d2"></div>
<div class="r" style="left:534px;top:1047px;width:28px;height:28px;background:#fff;border:2.5px solid #5d6873;border-radius:6px;box-sizing:border-box"></div>
<div class="r" style="left:589px;top:1043px;width:48px;height:36px;background:#72cc0a;border:2px solid #c3cdd8;border-radius:18px;box-sizing:border-box"></div>
<div class="t" style="left:613.0px;top:1050.5px;font-size:23px;line-height:23px;font-weight:400;color:#fff;transform:translateX(-50%)">4</div>
<div class="t" style="left:761px;top:1049px;font-size:28px;line-height:28px;font-weight:400;color:#000;transform:scaleX(1.0064);transform-origin:0 0;">Worn control panel</div>
<div class="t" style="left:1238px;top:1049px;font-size:28px;line-height:28px;font-weight:400;color:#000;">-</div>
<div class="t" style="left:1639px;top:1049px;font-size:28px;line-height:28px;font-weight:400;color:#000;transform:scaleX(0.9600);transform-origin:0 0;">Resolved</div>
<div class="t" style="left:1863px;top:1049px;font-size:28px;line-height:28px;font-weight:400;color:#000;">-</div>
<div class="t" style="left:2073px;top:1049px;font-size:28px;line-height:28px;font-weight:400;color:#000;">-</div>
<div class="t" style="left:2474px;top:1049px;font-size:28px;line-height:28px;font-weight:400;color:#000;">-</div>
<div class="t" style="left:2861px;top:1049px;font-size:28px;line-height:28px;font-weight:400;color:#000;transform:scaleX(0.9711);transform-origin:0 0;">PlanRadar Account</div>
<div class="t" style="left:3262px;top:1049px;font-size:28px;line-height:28px;font-weight:400;color:#000;">2020-</div>
<div class="r" style="left:508px;top:1118px;width:2822px;height:108px;background:#fff"></div>
<div class="r" style="left:508px;top:1226px;width:2822px;height:2px;background:#bac6d2"></div>
<div class="r" style="left:534px;top:1157px;width:28px;height:28px;background:#fff;border:2.5px solid #5d6873;border-radius:6px;box-sizing:border-box"></div>
<div class="r" style="left:589px;top:1153px;width:48px;height:36px;background:#5f6058;border:2px solid #5f6058;border-radius:18px;box-sizing:border-box"></div>
<div class="t" style="left:613.0px;top:1160.5px;font-size:23px;line-height:23px;font-weight:400;color:#fff;transform:translateX(-50%)">3</div>
<div class="t" style="left:761px;top:1159px;font-size:28px;line-height:28px;font-weight:400;color:#000;transform:scaleX(0.9847);transform-origin:0 0;">Stuck elevator</div>
<div class="t" style="left:1238px;top:1159px;font-size:28px;line-height:28px;font-weight:400;color:#000;">-</div>
<div class="t" style="left:1639px;top:1159px;font-size:28px;line-height:28px;font-weight:400;color:#000;transform:scaleX(0.9600);transform-origin:0 0;">Rejected</div>
<div class="t" style="left:1863px;top:1159px;font-size:28px;line-height:28px;font-weight:400;color:#000;">-</div>
<div class="t" style="left:2073px;top:1159px;font-size:28px;line-height:28px;font-weight:400;color:#000;">-</div>
<div class="t" style="left:2474px;top:1159px;font-size:28px;line-height:28px;font-weight:400;color:#000;">-</div>
<div class="t" style="left:2861px;top:1159px;font-size:28px;line-height:28px;font-weight:400;color:#000;transform:scaleX(0.9711);transform-origin:0 0;">PlanRadar Account</div>
<div class="t" style="left:3262px;top:1159px;font-size:28px;line-height:28px;font-weight:400;color:#000;">2020-</div>
<div class="r" style="left:508px;top:1228px;width:2822px;height:108px;background:#fff"></div>
<div class="r" style="left:508px;top:1336px;width:2822px;height:2px;background:#bac6d2"></div>
<div class="r" style="left:534px;top:1267px;width:28px;height:28px;background:#fff;border:2.5px solid #5d6873;border-radius:6px;box-sizing:border-box"></div>
<div class="r" style="left:589px;top:1263px;width:48px;height:36px;background:#e0440e;border:2px solid #c3cdd8;border-radius:18px;box-sizing:border-box"></div>
<div class="t" style="left:613.0px;top:1270.5px;font-size:23px;line-height:23px;font-weight:400;color:#fff;transform:translateX(-50%)">2</div>
<div class="t" style="left:761px;top:1269px;font-size:28px;line-height:28px;font-weight:400;color:#000;transform:scaleX(0.9946);transform-origin:0 0;">Water intrusion scuncheon</div>
<div class="t" style="left:1238px;top:1269px;font-size:28px;line-height:28px;font-weight:400;color:#000;">-</div>
<div class="t" style="left:1639px;top:1269px;font-size:28px;line-height:28px;font-weight:400;color:#000;transform:scaleX(0.9635);transform-origin:0 0;">Open</div>
<div class="t" style="left:1849px;top:1269px;font-size:28px;line-height:28px;font-weight:400;color:#000;transform:scaleX(1.0029);transform-origin:0 0;">Normal</div>
<div class="t" style="left:2060px;top:1269px;font-size:28px;line-height:28px;font-weight:400;color:#000;transform:scaleX(0.9711);transform-origin:0 0;">PlanRadar Account</div>
<div class="t" style="left:2474px;top:1269px;font-size:28px;line-height:28px;font-weight:400;color:#000;">-</div>
<div class="t" style="left:2861px;top:1269px;font-size:28px;line-height:28px;font-weight:400;color:#000;transform:scaleX(0.9711);transform-origin:0 0;">PlanRadar Account</div>
<div class="t" style="left:3262px;top:1269px;font-size:28px;line-height:28px;font-weight:400;color:#000;">2020-</div>
<div class="r" style="left:508px;top:1338px;width:2822px;height:106px;background:#fff"></div>
<div class="r" style="left:534px;top:1377px;width:28px;height:28px;background:#fff;border:2.5px solid #5d6873;border-radius:6px;box-sizing:border-box"></div>
<div class="r" style="left:589px;top:1373px;width:48px;height:36px;background:#e0440e;border:2px solid #c3cdd8;border-radius:18px;box-sizing:border-box"></div>
<div class="t" style="left:613.0px;top:1380.5px;font-size:23px;line-height:23px;font-weight:400;color:#fff;transform:translateX(-50%)">1</div>
<div class="t" style="left:761px;top:1379px;font-size:28px;line-height:28px;font-weight:400;color:#000;transform:scaleX(0.9858);transform-origin:0 0;">Formation of condensate in window</div>
<div class="t" style="left:1238px;top:1379px;font-size:28px;line-height:28px;font-weight:400;color:#000;">-</div>
<div class="t" style="left:1639px;top:1379px;font-size:28px;line-height:28px;font-weight:400;color:#000;transform:scaleX(0.9635);transform-origin:0 0;">Open</div>
<div class="t" style="left:1849px;top:1379px;font-size:28px;line-height:28px;font-weight:400;color:#000;transform:scaleX(1.0029);transform-origin:0 0;">Normal</div>
<div class="t" style="left:2073px;top:1379px;font-size:28px;line-height:28px;font-weight:400;color:#000;">-</div>
<div class="t" style="left:2474px;top:1379px;font-size:28px;line-height:28px;font-weight:400;color:#000;">-</div>
<div class="t" style="left:2861px;top:1379px;font-size:28px;line-height:28px;font-weight:400;color:#000;transform:scaleX(0.9711);transform-origin:0 0;">PlanRadar Account</div>
<div class="t" style="left:3262px;top:1379px;font-size:28px;line-height:28px;font-weight:400;color:#000;">2020-</div>
<svg class="s" style="left:1168px;top:492px;" width="40" height="40" viewBox="1168 492 40 40"><path d="M1173.4 525.3 L1175.2 516.5 L1189.2 502.5 L1196.5 509.8 L1183 523.3 Z" fill="#000" stroke="#000" stroke-width="0.8" stroke-linejoin="round"/><path d="M1190.8 500.9 L1194.3 497.4 Q1197.5 494.5 1200.7 497.7 L1201.3 498.3 Q1204.5 501.5 1201.6 504.7 L1198.1 508.2 Z" fill="#000"/><path d="M1181.5 515.6 L1189.8 507.3" stroke="#f2f2f2" stroke-width="1.3" stroke-linecap="round"/><path d="M1176.6 522.2 L1177.9 517.6 L1181.4 520.9 Z" fill="#f2f2f2"/></svg>
<div class="r" style="left:3330px;top:122px;width:26px;height:1458px;background:#ebeff3"></div>
<div class="r" style="left:507px;top:462px;width:2825px;height:101px;border:6px solid #ff8800;border-radius:10px;box-sizing:border-box"></div>
<div class="r" style="left:692px;top:484px;width:56px;height:56px;background:#ff8800;border-radius:50%"></div>
<div class="t" style="left:720px;top:496px;font-size:31px;line-height:31px;font-weight:400;color:#000;transform:translateX(-50%)">2</div>
<svg class="s" style="left:340px;top:340px;" width="200" height="115" viewBox="340 340 200 115"><path d="M349 351.5 L500 431" stroke="#ff8800" stroke-width="10" stroke-linecap="round"/><path d="M511.5 412 Q513 410.5 514.5 412.5 L532 440 Q533.5 443.5 530 444 L495.5 446.5 Q492 446.5 493.5 443.5 Z" fill="#ff8800"/></svg>
<div class="r" style="left:506px;top:1580px;width:2824px;height:28px;background:#f7f7f7;border-top:1px solid #e2e2e2;box-sizing:border-box"></div>
<div class="r" style="left:512px;top:1588px;width:231px;height:16px;background:#c1c1c1;border-radius:8px"></div>
<div class="r" style="left:3218px;top:1370px;width:100px;height:100px;background:#0560c8;border-radius:50%;box-shadow:0 2px 8px rgba(0,0,0,0.18)"></div>
<svg class="s" style="left:3240px;top:1385px;" width="60" height="70" viewBox="3240 1385 60 70"><path d="M3255.5 1408.5 Q3258 1398.5 3268.5 1398.5 Q3280 1398.5 3280 1409 Q3280 1413 3276 1417 L3271 1422 Q3267.5 1425.5 3267.5 1428.5" fill="none" stroke="#fff" stroke-width="8" stroke-linecap="round" stroke-linejoin="round"/><circle cx="3267.5" cy="1442.3" r="5.3" fill="#fff"/></svg></div></body></html>
